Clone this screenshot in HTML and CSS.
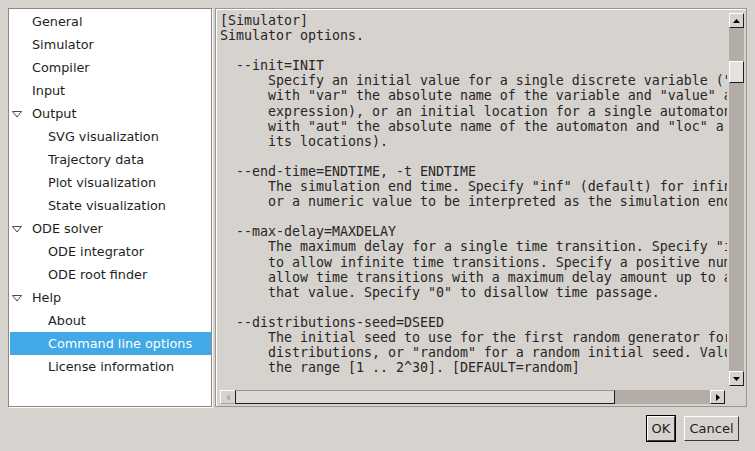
FILE: index.html
```html
<!DOCTYPE html>
<html>
<head>
<meta charset="utf-8">
<link rel="stylesheet" href="styles.css">
</head>
<body>
<div class="dialog">
  <div class="main">
    <div class="tree">
      <div class="row"><span class="exp"></span><span class="label">General</span></div>
      <div class="row"><span class="exp"></span><span class="label">Simulator</span></div>
      <div class="row"><span class="exp"></span><span class="label">Compiler</span></div>
      <div class="row"><span class="exp"></span><span class="label">Input</span></div>
      <div class="row"><span class="exp"><svg width="10" height="7" viewBox="0 0 10 7"><polygon points="0.5,0.5 9.5,0.5 5,6" fill="#fff" stroke="#4a4a4a" stroke-width="1"/></svg></span><span class="label">Output</span></div>
      <div class="row child"><span class="exp"></span><span class="label">SVG visualization</span></div>
      <div class="row child"><span class="exp"></span><span class="label">Trajectory data</span></div>
      <div class="row child"><span class="exp"></span><span class="label">Plot visualization</span></div>
      <div class="row child"><span class="exp"></span><span class="label">State visualization</span></div>
      <div class="row"><span class="exp"><svg width="10" height="7" viewBox="0 0 10 7"><polygon points="0.5,0.5 9.5,0.5 5,6" fill="#fff" stroke="#4a4a4a" stroke-width="1"/></svg></span><span class="label">ODE solver</span></div>
      <div class="row child"><span class="exp"></span><span class="label">ODE integrator</span></div>
      <div class="row child"><span class="exp"></span><span class="label">ODE root finder</span></div>
      <div class="row"><span class="exp"><svg width="10" height="7" viewBox="0 0 10 7"><polygon points="0.5,0.5 9.5,0.5 5,6" fill="#fff" stroke="#4a4a4a" stroke-width="1"/></svg></span><span class="label">Help</span></div>
      <div class="row child"><span class="exp"></span><span class="label">About</span></div>
      <div class="row child selected"><span class="exp"></span><span class="label">Command line options</span></div>
      <div class="row child"><span class="exp"></span><span class="label">License information</span></div>
    </div>
    <div class="frame">
      <div class="text">[Simulator]
Simulator options.

  --init=INIT
      Specify an initial value for a single discrete variable ("var=value"),
      with "var" the absolute name of the variable and "value" a value (CIF
      expression), or an initial location for a single automaton ("aut=loc"),
      with "aut" the absolute name of the automaton and "loc" a name of one of
      its locations).

  --end-time=ENDTIME, -t ENDTIME
      The simulation end time. Specify "inf" (default) for infinite time,
      or a numeric value to be interpreted as the simulation end time.

  --max-delay=MAXDELAY
      The maximum delay for a single time transition. Specify "inf" (default)
      to allow infinite time transitions. Specify a positive numeric value to
      allow time transitions with a maximum delay amount up to and including
      that value. Specify "0" to disallow time passage.

  --distributions-seed=DSEED
      The initial seed to use for the first random generator for stochastic
      distributions, or "random" for a random initial seed. Value must be in
      the range [1 .. 2^30]. [DEFAULT=random]</div>
      <div class="vscroll">
        <div class="sbtn"><svg width="7" height="4" viewBox="0 0 7 4"><polygon points="3.5,0 7,4 0,4" fill="#000"/></svg></div>
        <div class="vtrack"><div class="vthumb"></div></div>
        <div class="sbtn"><svg width="7" height="4" viewBox="0 0 7 4"><polygon points="0,0 7,0 3.5,4" fill="#000"/></svg></div>
      </div>
      <div class="hscroll">
        <div class="sbtn disabled"><svg width="4" height="7" viewBox="0 0 4 7"><polygon points="4,0 4,7 0,3.5" fill="#b3aeaa"/></svg></div>
        <div class="hthumb"></div>
        <div class="htrack"></div>
        <div class="sbtn"><svg width="4" height="7" viewBox="0 0 4 7"><polygon points="0,0 4,3.5 0,7" fill="#000"/></svg></div>
      </div>
    </div>
  </div>
  <div class="buttons">
    <div class="btn-default"><div class="btn ok">OK</div></div>
    <div class="btn cancel">Cancel</div>
  </div>
</div>
</body>
</html>
```

FILE: styles.css
```css
html, body {
  margin: 0;
  padding: 0;
}
body {
  width: 755px;
  height: 451px;
  overflow: hidden;
  background: #d6d2ce;
  font-family: "DejaVu Sans", sans-serif;
  font-size: 12.8px;
  color: #1e1e1e;
}
.dialog {
  padding: 8px 8px 0 8px;
}
.main {
  display: flex;
  gap: 3px;
  height: 399px;
}
.tree {
  box-sizing: border-box;
  width: 204px;
  height: 399px;
  background: #fff;
  border: 1px solid #8c8884;
  box-shadow: 1px 1px 0 #fff;
  padding: 1px 0 1px 1px;
}
.row {
  display: flex;
  align-items: center;
  height: 23px;
  white-space: nowrap;
}
.row.child {
  padding-left: 16px;
}
.exp {
  width: 22px;
  flex: none;
  display: flex;
  align-items: center;
  padding-left: 2px;
  box-sizing: border-box;
}
.exp svg {
  display: block;
  margin-top: 1px;
}
.label {
  line-height: 23px;
}
.row.selected {
  background: #40a9e6;
  color: #fff;
}
.frame {
  box-sizing: border-box;
  width: 532px;
  height: 399px;
  border: 1px solid #9a9692;
  box-shadow: inset 1px 1px 0 #fff;
  padding: 0 2px 2px 1px;
  display: grid;
  grid-template-columns: 1fr 15px;
  grid-template-rows: 1fr 14px;
  column-gap: 2px;
  row-gap: 4px;
}
.text {
  overflow: hidden;
  white-space: pre;
  font-family: "DejaVu Sans Mono", monospace;
  font-size: 13.29px;
  line-height: 15.1px;
  color: #262626;
  padding: 4px 0 0 3px;
}
.vscroll {
  margin-top: 4px;
  display: flex;
  flex-direction: column;
}
.sbtn {
  box-sizing: border-box;
  flex: none;
  width: 15px;
  height: 14px;
  background: #d6d2ce;
  border: 1px solid;
  border-color: #fff #1e1e1e #1e1e1e #fff;
  display: flex;
  align-items: center;
  justify-content: center;
}
.vscroll .sbtn {
  height: 15px;
}
.hscroll .sbtn {
  width: 15px;
  height: 14px;
}
.sbtn.disabled {
  border-color: #fff #d6d2ce #a8a4a0 #fff;
}
.vtrack {
  flex: 1;
  background: #b4aca7;
  padding-top: 33px;
}
.vthumb {
  box-sizing: border-box;
  height: 22px;
  background: #e4e1de;
  border: 1px solid;
  border-color: #fff #1e1e1e #1e1e1e #fff;
}
.hscroll {
  margin: 0 2px 0 3px;
  display: flex;
}
.hthumb {
  box-sizing: border-box;
  width: 380px;
  height: 14px;
  background: #dcd9d6;
  border: 1px solid;
  border-color: #9a9692 #1e1e1e #1e1e1e #1e1e1e;
}
.htrack {
  flex: 1;
  background: #b4aca7;
}
.buttons {
  display: flex;
  justify-content: flex-end;
  align-items: flex-start;
  gap: 8px;
  margin-top: 8px;
  padding-right: 8px;
}
.btn {
  box-sizing: border-box;
  height: 25px;
  line-height: 23px;
  padding: 0 5px;
  text-align: center;
  border: 1px solid;
  border-color: #fff #3a3a3a #3a3a3a #fff;
  background: #d6d2ce;
  font-size: 13px;
  color: #1e1e1e;
}
.btn-default {
  border: 1px solid #000;
}
.ok {
  width: 28px;
  padding: 0;
}
.cancel {
  width: 55px;
  margin-top: 1px;
  padding: 0;
}
```
